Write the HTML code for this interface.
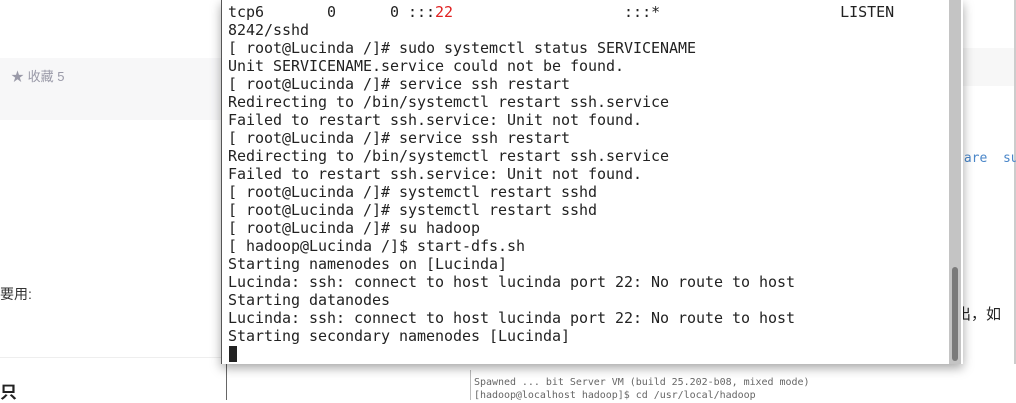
<!DOCTYPE html>
<html><head><meta charset="utf-8"><style>
body{margin:0;width:1016px;height:400px;overflow:hidden;background:#fff;position:relative;font-family:"Liberation Sans","Noto Sans CJK SC",sans-serif}
.abs{position:absolute}
pre{margin:0;font-family:"DejaVu Sans Mono","Liberation Mono",monospace;font-size:15px;line-height:18px;color:#222;letter-spacing:-0.03px}
</style></head><body>
<div class="abs" style="left:0;top:58px;width:222px;height:62px;background:#f7f7f8"></div>
<div class="abs" style="left:11px;top:66px;font-size:13px;color:#9a9aa8">&#9733; 收藏 5</div>
<div class="abs" style="left:0;top:284px;font-size:14px;color:#333">要用:</div>
<div class="abs" style="left:0;top:357px;width:222px;height:1px;background:#eee"></div>
<div class="abs" style="left:0;top:378px;font-size:17px;color:#222;font-weight:bold">只</div>
<div class="abs" style="left:962px;top:48px;width:54px;height:38px;background:#f7f7f7"></div>
<div class="abs" style="left:1014px;top:0;width:2px;height:400px;background:#ccc"></div>
<div class="abs" style="left:956px;top:151px;font-family:'DejaVu Sans Mono',monospace;font-size:13px;color:#4a86c8;white-space:pre">hare  su</div>
<div class="abs" style="left:956px;top:303px;font-size:15px;color:#222">出，如</div>
<div class="abs" style="left:226px;top:364px;width:790px;height:36px;background:#fff"></div>
<div class="abs" style="left:226px;top:364px;width:1px;height:36px;background:#666"></div>
<div class="abs" style="left:470px;top:370px;width:1px;height:30px;background:#bbb"></div>
<pre class="abs" style="left:474px;top:376px;font-size:10px;line-height:13px;color:#666">Spawned ... bit Server VM (build 25.202-b08, mixed mode)
[hadoop@localhost hadoop]$ cd /usr/local/hadoop</pre>
<div class="abs" style="left:221px;top:0;width:741px;height:364px;background:#fff;border-left:1px solid #555;box-shadow:0 4px 10px rgba(0,0,0,.35)"></div>
<pre class="abs" style="left:228px;top:3px">tcp6       0      0 :::<span style="color:#e02020">22</span>                   :::*                    LISTEN
8242/sshd
[ root@Lucinda /]# sudo systemctl status SERVICENAME
Unit SERVICENAME.service could not be found.
[ root@Lucinda /]# service ssh restart
Redirecting to /bin/systemctl restart ssh.service
Failed to restart ssh.service: Unit not found.
[ root@Lucinda /]# service ssh restart
Redirecting to /bin/systemctl restart ssh.service
Failed to restart ssh.service: Unit not found.
[ root@Lucinda /]# systemctl restart sshd
[ root@Lucinda /]# systemctl restart sshd
[ root@Lucinda /]# su hadoop
[ hadoop@Lucinda /]$ start-dfs.sh
Starting namenodes on [Lucinda]
Lucinda: ssh: connect to host lucinda port 22: No route to host
Starting datanodes
Lucinda: ssh: connect to host lucinda port 22: No route to host
Starting secondary namenodes [Lucinda]</pre>
<div class="abs" style="left:229px;top:346px;width:8px;height:16px;background:#222"></div>
<div class="abs" style="left:949px;top:0;width:12px;height:364px;background:#c4c4c4"></div>
<div class="abs" style="left:952px;top:267px;width:6px;height:94px;background:#7a7a7a;border-radius:3px"></div>
</body></html>
